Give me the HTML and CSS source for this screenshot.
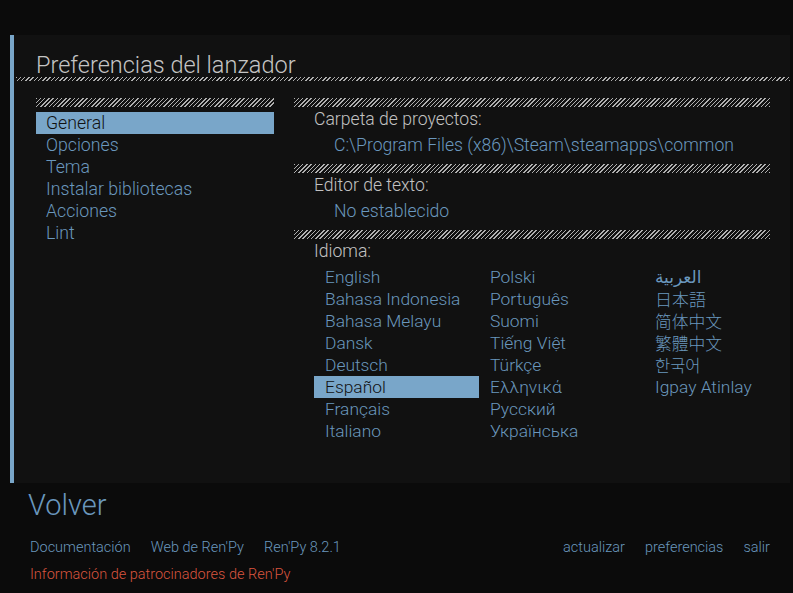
FILE: index.html
```html
<!DOCTYPE html>
<html lang="es">
<head>
<meta charset="utf-8">
<title>Preferencias del lanzador</title>
<link rel="stylesheet" href="styles.css">
</head>
<body>
<div class="screen">
  <div class="panel">
    <div class="title">Preferencias del lanzador</div>
    <div class="title-rule"></div>
    <div class="columns">
      <div class="side">
        <div class="hatch"></div>
        <ul class="menu">
          <li class="sel">General</li>
          <li>Opciones</li>
          <li>Tema</li>
          <li>Instalar bibliotecas</li>
          <li>Acciones</li>
          <li>Lint</li>
        </ul>
      </div>
      <div class="main">
        <div class="hatch"></div>
        <div class="label">Carpeta de proyectos:</div>
        <div class="value">C:\Program Files (x86)\Steam\steamapps\common</div>
        <div class="hatch"></div>
        <div class="label">Editor de texto:</div>
        <div class="value">No establecido</div>
        <div class="hatch"></div>
        <div class="label">Idioma:</div>
        <div class="langs">
          <div class="lang">English</div>
          <div class="lang">Polski</div>
          <div class="lang ar">العربية</div>
          <div class="lang">Bahasa Indonesia</div>
          <div class="lang">Português</div>
          <div class="lang cjk-jp">日本語</div>
          <div class="lang">Bahasa Melayu</div>
          <div class="lang">Suomi</div>
          <div class="lang cjk-sc">简体中文</div>
          <div class="lang">Dansk</div>
          <div class="lang">Tiếng Việt</div>
          <div class="lang cjk-tc">繁體中文</div>
          <div class="lang">Deutsch</div>
          <div class="lang">Türkçe</div>
          <div class="lang cjk-kr">한국어</div>
          <div class="lang sel">Español</div>
          <div class="lang">Ελληνικά</div>
          <div class="lang">Igpay Atinlay</div>
          <div class="lang">Français</div>
          <div class="lang">Русский</div>
          <div class="lang"></div>
          <div class="lang">Italiano</div>
          <div class="lang">Українська</div>
          <div class="lang"></div>
        </div>
      </div>
    </div>
  </div>
  <div class="footer">
    <div class="back">Volver</div>
    <div class="links">
      <div class="group">
        <span>Documentación</span>
        <span>Web de Ren'Py</span>
        <span>Ren'Py 8.2.1</span>
      </div>
      <div class="group">
        <span>actualizar</span>
        <span>preferencias</span>
        <span>salir</span>
      </div>
    </div>
    <div class="sponsor">Información de patrocinadores de Ren'Py</div>
  </div>
</div>
</body>
</html>
```

FILE: styles.css
```css
* { box-sizing: border-box; }
html, body {
  margin: 0;
  padding: 0;
  background: #0b0b0b;
}
body {
  font-family: "Roboto Light", Roboto, "Liberation Sans", sans-serif;
  font-weight: 300;
  color: #c6c6c6;
  width: 793px;
  height: 593px;
  overflow: hidden;
}
.screen {
  padding-top: 35px;
}
.panel {
  margin-left: 10px;
  width: 780px;
  height: 448px;
  background: #111111;
  border-left: 4px solid #79a6c9;
}
.title {
  padding-left: 22px;
  padding-top: 19px;
  font-size: 23.5px;
  line-height: 23px;
  height: 42px;
  color: #c4c4c4;
}
.title-rule {
  margin-left: 2px;
  height: 4px;
  background: repeating-linear-gradient(135deg, #b0b0b0 0 1px, transparent 1px 3px);
}
.columns {
  display: flex;
  gap: 20px;
  padding-left: 22px;
  padding-top: 17px;
}
.hatch {
  height: 9px;
  background: repeating-linear-gradient(135deg, #b0b0b0 0 1px, transparent 1px 3px);
}
.side { width: 238px; }
.main { width: 476px; }
.menu {
  list-style: none;
  margin: 5px 0 0;
  padding: 0;
}
.menu li {
  height: 22px;
  line-height: 22px;
  font-size: 17.7px;
  padding-left: 10px;
  color: #6a97bd;
}
.menu li.sel {
  background: #79a6c9;
  color: #111111;
}
.label {
  margin-top: 1px;
  height: 22px;
  line-height: 22px;
  font-size: 17.6px;
  padding-left: 20px;
  color: #c2c2c2;
}
.value {
  margin-top: 4px;
  margin-bottom: 8px;
  height: 22px;
  line-height: 22px;
  font-size: 17.6px;
  padding-left: 40px;
  color: #6a97bd;
  white-space: nowrap;
}
.langs {
  margin-top: 4px;
  margin-left: 20px;
  display: grid;
  grid-template-columns: repeat(3, 165px);
}
.lang {
  height: 22px;
  line-height: 22px;
  font-size: 17.4px;
  padding-left: 11px;
  color: #6a97bd;
  white-space: nowrap;
}
.lang.sel {
  background: #79a6c9;
  color: #111111;
}
.lang.ar { font-family: "DejaVu Sans", sans-serif; font-weight: 400; font-size: 17px; }
.lang.cjk-jp { font-family: "Noto Sans CJK JP", sans-serif; font-size: 17px; }
.lang.cjk-sc { font-family: "Noto Sans CJK SC", sans-serif; font-size: 16.8px; }
.lang.cjk-tc { font-family: "Noto Sans CJK TC", sans-serif; font-size: 16.8px; }
.lang.cjk-kr { font-family: "Noto Sans CJK KR", sans-serif; font-size: 16.5px; }
.footer {
  padding-left: 28px;
  padding-right: 23px;
}
.back {
  margin-top: 5px;
  height: 34px;
  line-height: 34px;
  font-size: 29px;
  color: #6a97bd;
}
.links {
  margin-top: 17px;
  display: flex;
  justify-content: space-between;
  font-size: 14.5px;
  line-height: 18px;
  color: #6a97bd;
}
.group {
  display: flex;
  gap: 20px;
  padding-left: 2px;
}
.sponsor {
  margin-top: 9px;
  padding-left: 2px;
  font-size: 14.5px;
  line-height: 18px;
  color: #d9553f;
}
```
